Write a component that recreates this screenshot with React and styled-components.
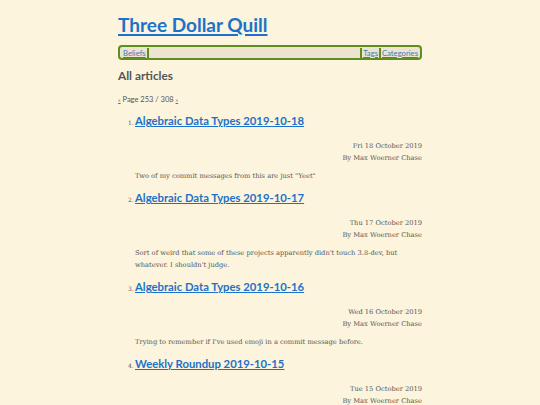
import React from 'react'
import styled, { createGlobalStyle } from 'styled-components'

const articles = [
  {
    title: 'Algebraic Data Types 2019-10-18',
    date: 'Fri 18 October 2019',
    summary: 'Two of my commit messages from this are just "Yeet"'
  },
  {
    title: 'Algebraic Data Types 2019-10-17',
    date: 'Thu 17 October 2019',
    summary:
      "Sort of weird that some of these projects apparently didn't touch 3.8-dev, but whatever. I shouldn't judge."
  },
  {
    title: 'Algebraic Data Types 2019-10-16',
    date: 'Wed 16 October 2019',
    summary: "Trying to remember if I've used emoji in a commit message before."
  },
  {
    title: 'Weekly Roundup 2019-10-15',
    date: 'Tue 15 October 2019',
    summary: ''
  }
]

const GlobalStyle = createGlobalStyle`
  html, body {
    margin: 0;
    padding: 0;
    background: #fcf4dc;
  }
  body {
    font-family: "DejaVu Serif", serif;
    color: #585858;
    overflow: hidden;
  }
`

const App = () => (
  <>
    <GlobalStyle />
    <Page>
      <SiteTitle href='#'>Three Dollar Quill</SiteTitle>
      <Nav>
        <NavGroup>
          <NavItem side='right'>
            <NavLink href='#'>Beliefs</NavLink>
          </NavItem>
        </NavGroup>
        <NavGroup>
          <NavItem side='left'>
            <NavLink href='#'>Tags</NavLink>
          </NavItem>
          <NavItem side='left'>
            <NavLink href='#'>Categories</NavLink>
          </NavItem>
        </NavGroup>
      </Nav>
      <Heading>All articles</Heading>
      <Pager>
        <PagerLink href='#'>«</PagerLink> Page 253 / 308{' '}
        <PagerLink href='#'>»</PagerLink>
      </Pager>
      <ArticleList>
        {articles.map((a, i) => (
          <Article key={a.title}>
            <ArticleHead>
              <Number>{i + 1}.</Number>
              <ArticleTitle href='#'>{a.title}</ArticleTitle>
            </ArticleHead>
            <Meta>
              <div>{a.date}</div>
              <div>By Max Woerner Chase</div>
            </Meta>
            {a.summary && <Summary>{a.summary}</Summary>}
          </Article>
        ))}
      </ArticleList>
    </Page>
  </>
)

export default App

const Page = styled.main`
  width: 304px;
  margin: 0 auto;
  padding-top: 14px;
`

const SiteTitle = styled.a`
  display: inline-block;
  font-family: "Lato", sans-serif;
  font-weight: 700;
  font-size: 19px;
  line-height: 22px;
  color: #1b72c8;
  text-decoration: underline;
  text-decoration-thickness: 1.5px;
  text-underline-offset: 2px;
`

const Nav = styled.nav`
  margin-top: 9px;
  height: 11px;
  border: 2px solid #5f8d1f;
  border-radius: 4px;
  background: #ece4cf;
  display: flex;
  justify-content: space-between;
  align-items: center;
  padding: 0 1px 0 2px;
`

const NavGroup = styled.ul`
  display: flex;
  margin: 0;
  padding: 0;
  list-style: none;
`

const NavItem = styled.li`
  font-family: "Lato", sans-serif;
  font-size: 7.7px;
  line-height: 10px;
  padding: 0 1px;
  ${({ side }) => `border-${side}: 2px solid #5f8d1f;`}
`

const NavLink = styled.a`
  color: #3f7bb8;
  text-decoration: underline;
`

const Heading = styled.h2`
  margin: 8px 0 0;
  font-family: "Lato", sans-serif;
  font-weight: 700;
  font-size: 11.8px;
  line-height: 16px;
  color: #555;
`

const Pager = styled.p`
  margin: 11px 0 0;
  font-family: "Lato", sans-serif;
  font-size: 7.5px;
  line-height: 10px;
  color: #555;
`

const PagerLink = styled.a`
  color: #3f7bb8;
  font-size: 6px;
`

const ArticleList = styled.ol`
  margin: 8px 0 0;
  padding: 0 0 0 17px;
  list-style: none;
`

const Article = styled.li`
  margin-bottom: 8px;
`

const ArticleHead = styled.div`
  display: flex;
  align-items: baseline;
  margin-left: -7px;
  line-height: 16px;
`

const Number = styled.span`
  font-family: "DejaVu Serif", serif;
  font-size: 6px;
  width: 7px;
  color: #555;
`

const ArticleTitle = styled.a`
  font-family: "Lato", sans-serif;
  font-weight: 700;
  font-size: 11.3px;
  color: #1b72c8;
  text-decoration: underline;
  text-decoration-thickness: 1px;
  text-underline-offset: 1px;
`

const Meta = styled.div`
  margin-top: 9px;
  text-align: right;
  font-size: 6.7px;
  line-height: 12px;
  color: #585858;
`

const Summary = styled.p`
  margin: 6px 0 0;
  font-size: 6.7px;
  line-height: 12px;
  color: #585858;
`
